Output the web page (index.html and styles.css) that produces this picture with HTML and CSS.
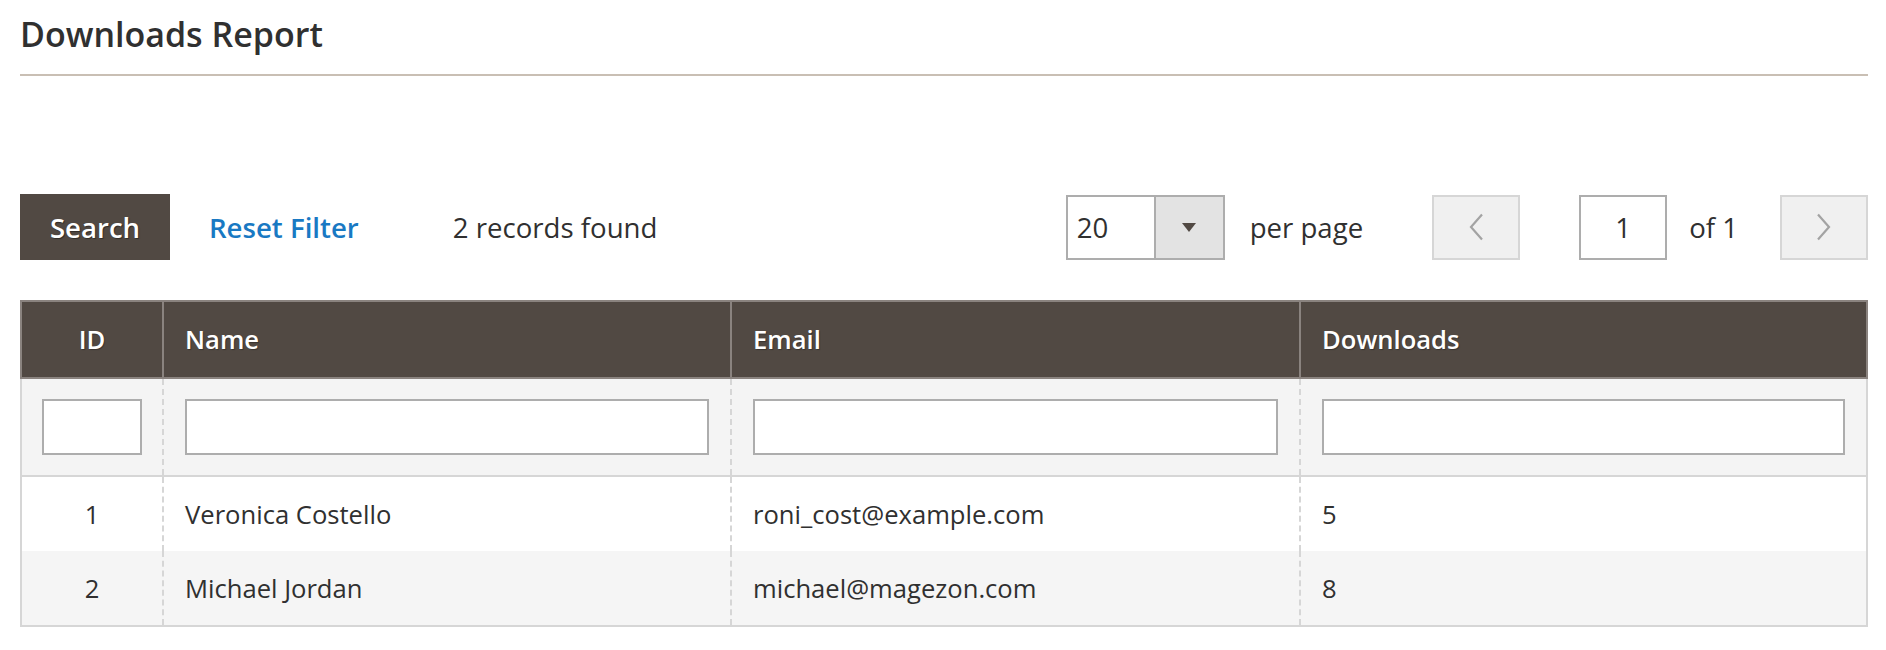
FILE: index.html
```html
<!DOCTYPE html>
<html lang="en">
<head>
  <meta charset="UTF-8">
  <title>Downloads Report</title>
  <link rel="stylesheet" href="styles.css">
</head>
<body>
  <div class="page">
    <div class="page-title">
      <h1>Downloads Report</h1>
    </div>

    <div class="toolbar">
      <div class="actions">
        <button class="btn-search">Search</button>
        <a href="#" class="reset-link">Reset Filter</a>
        <span class="records">2 records found</span>
      </div>
      <div class="pager">
        <div class="limiter">
          <span class="limiter-value">20</span>
          <span class="limiter-toggle"><span class="caret"></span></span>
        </div>
        <span class="per-page">per page</span>
        <button class="page-btn prev" disabled>
          <svg width="16" height="28" viewBox="0 0 16 28"><path d="M14 1.5 L3 14 L14 26.5" fill="none" stroke="#a3a3a3" stroke-width="2.2"/></svg>
        </button>
        <input class="page-input" type="text" value="1">
        <span class="page-total">of 1</span>
        <button class="page-btn next" disabled>
          <svg width="16" height="28" viewBox="0 0 16 28"><path d="M2 1.5 L13 14 L2 26.5" fill="none" stroke="#a3a3a3" stroke-width="2.2"/></svg>
        </button>
      </div>
    </div>

    <table class="grid">
      <colgroup>
        <col class="col-id">
        <col class="col-name">
        <col class="col-email">
        <col>
      </colgroup>
      <thead>
        <tr class="headings">
          <th class="center">ID</th>
          <th>Name</th>
          <th>Email</th>
          <th>Downloads</th>
        </tr>
        <tr class="filters">
          <td><input type="text"></td>
          <td><input type="text"></td>
          <td><input type="text"></td>
          <td><input type="text"></td>
        </tr>
      </thead>
      <tbody>
        <tr>
          <td class="center">1</td>
          <td>Veronica Costello</td>
          <td>roni_cost@example.com</td>
          <td>5</td>
        </tr>
        <tr class="even">
          <td class="center">2</td>
          <td>Michael Jordan</td>
          <td>michael@magezon.com</td>
          <td>8</td>
        </tr>
      </tbody>
    </table>
  </div>
</body>
</html>
```

FILE: styles.css
```css
body {
  margin: 0;
  font-family: 'Open Sans', 'Liberation Sans', sans-serif;
  color: #303030;
  background: #fff;
}
.page {
  padding: 0 18px 0 20px;
}
.page-title {
  height: 74px;
  border-bottom: 2px solid #c9bfb4;
  display: flex;
  align-items: center;
}
.page-title h1 {
  margin: 0 0 6px 0;
  font-size: 34px;
  font-weight: 600;
  color: #303030;
}
.toolbar {
  margin-top: 118px;
  height: 66px;
  display: flex;
  align-items: center;
  justify-content: space-between;
}
.actions {
  display: flex;
  align-items: center;
}
.btn-search {
  width: 150px;
  height: 66px;
  border: none;
  background: #514943;
  color: #fff;
  font-family: inherit;
  font-size: 27.6px;
  font-weight: 600;
  text-shadow: 1px 1px 1px rgba(0,0,0,0.4);
  cursor: pointer;
}
.reset-link {
  margin-left: 39px;
  color: #1979c3;
  font-size: 27.6px;
  font-weight: 600;
  text-decoration: none;
}
.records {
  margin-left: 94px;
  font-size: 27.6px;
}
.pager {
  display: flex;
  align-items: center;
  font-size: 27.6px;
}
.limiter {
  width: 159px;
  height: 65px;
  box-sizing: border-box;
  border: 2px solid #adadad;
  display: flex;
}
.limiter-value {
  flex: 1;
  display: flex;
  align-items: center;
  padding-left: 9px;
}
.limiter-toggle {
  width: 67px;
  background: #e3e3e3;
  border-left: 2px solid #adadad;
  display: flex;
  align-items: center;
  justify-content: center;
}
.caret {
  width: 0;
  height: 0;
  border-left: 7px solid transparent;
  border-right: 7px solid transparent;
  border-top: 9px solid #514943;
}
.per-page {
  margin-left: 25px;
}
.page-btn {
  width: 88px;
  height: 65px;
  box-sizing: border-box;
  background: #f0f0f0;
  border: 2px solid #d6d6d6;
  display: flex;
  align-items: center;
  justify-content: center;
  padding: 0;
}
.prev {
  margin-left: 69px;
}
.page-input {
  margin-left: 59px;
  width: 88px;
  height: 65px;
  box-sizing: border-box;
  border: 2px solid #adadad;
  text-align: center;
  font-family: inherit;
  font-size: 27.6px;
  color: #303030;
}
.page-total {
  margin-left: 22px;
}
.next {
  margin-left: 42px;
}
.grid {
  margin-top: 40px;
  width: 100%;
  border-collapse: collapse;
  table-layout: fixed;
  border: 2px solid #d6d6d6;
  font-size: 25.6px;
}
.col-id {
  width: 142px;
}
.col-name {
  width: 568px;
}
.col-email {
  width: 569px;
}
.grid th {
  height: 77px;
  box-sizing: border-box;
  background: #514943;
  color: #fff;
  font-weight: 600;
  text-align: left;
  padding: 0 21px;
  border: 2px solid #8a837f;
  text-shadow: 1px 1px 1px rgba(0,0,0,0.3);
}
.grid td {
  height: 75px;
  box-sizing: border-box;
  padding: 0 21px;
  border-left: 2px dashed #d6d6d6;
  border-right: 2px dashed #d6d6d6;
}
.grid .center {
  text-align: center;
}
.filters td {
  height: 98px;
  background: #f4f4f4;
  border-bottom: 2px solid #d6d6d6;
}
.filters input {
  display: block;
  width: 100%;
  height: 56px;
  box-sizing: border-box;
  border: 2px solid #adadad;
  background: #fff;
}
.filters td:first-child {
  padding: 0 20px;
}
.even td {
  background: #f5f5f5;
}
```
